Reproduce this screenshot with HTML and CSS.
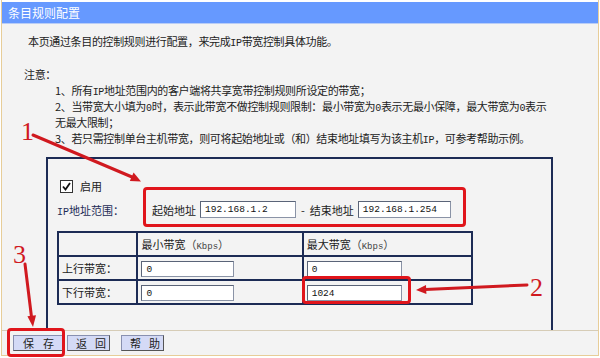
FILE: index.html
```html
<!DOCTYPE html>
<html lang="zh">
<head>
<meta charset="utf-8">
<title>条目规则配置</title>
<link rel="stylesheet" href="styles.css">
</head>
<body>
<div class="frame">
  <div class="titlebar">条目规则配置</div>
  <div class="content">
    <p class="intro">本页通过条目的控制规则进行配置，来完成<span class="lat">IP</span>带宽控制具体功能。</p>
    <p class="note-title">注意：</p>
    <div class="notes">
      <p>1、所有<span class="lat">IP</span>地址范围内的客户端将共享宽带控制规则所设定的带宽；</p>
      <p>2、当带宽大小填为<span class="lat">0</span>时，表示此带宽不做控制规则限制：最小带宽为<span class="lat">0</span>表示无最小保障，最大带宽为<span class="lat">0</span>表示<br>无最大限制；</p>
      <p>3、若只需控制单台主机带宽，则可将起始地址或（和）结束地址填写为该主机<span class="lat">IP</span>，可参考帮助示例。</p>
    </div>
    <div class="box">
      <div class="enable">
        <span class="check"><svg width="11" height="11" viewBox="0 0 11 11"><path d="M2 5.5 L4.5 8.5 L9 2" fill="none" stroke="#111" stroke-width="1.8"/></svg></span>
        <span>启用</span>
      </div>
      <div class="iprow">
        <span class="iplabel"><span class="lat">IP</span>地址范围：</span>
        <span class="field-label">起始地址</span>
        <span class="input w96">192.168.1.2</span>
        <span class="dash">-</span>
        <span class="field-label">结束地址</span>
        <span class="input w93">192.168.1.254</span>
      </div>
      <table class="bw">
        <tr class="head">
          <td class="c1"></td>
          <td class="c2">最小带宽<span class="unit">（<span class="lat">Kbps</span>）</span></td>
          <td class="c3">最大带宽<span class="unit">（<span class="lat">Kbps</span>）</span></td>
        </tr>
        <tr>
          <td class="c1">上行带宽：</td>
          <td class="c2"><span class="input w93">0</span></td>
          <td class="c3"><span class="input w95">0</span></td>
        </tr>
        <tr>
          <td class="c1">下行带宽：</td>
          <td class="c2"><span class="input w93">0</span></td>
          <td class="c3"><span class="input w95">1024</span></td>
        </tr>
      </table>
    </div>
  </div>
  <div class="footer">
    <button class="btn save">保存</button>
    <button class="btn back">返回</button>
    <button class="btn help">帮助</button>
  </div>

  <div class="hl hl1"></div>
  <div class="hl hl2"></div>
  <div class="hl hl3"></div>
  <svg class="marks" width="600" height="358" viewBox="0 0 600 358">
    <g fill="#d0191f" stroke="none">
      <text x="21" y="140" class="num">1</text>
      <text x="530" y="296" class="num">2</text>
      <text x="13" y="263" class="num">3</text>
      <polygon points="141,181.5 129.8,181 133.6,172.6"/>
      <polygon points="416,290 426,285 426.4,294"/>
      <polygon points="33,327 27.4,316.2 36,315.2"/>
    </g>
    <g stroke="#d0191f" stroke-width="3" stroke-linecap="round" fill="none">
      <line x1="33" y1="135" x2="132" y2="177"/>
      <line x1="527" y1="285" x2="425" y2="289.5"/>
      <line x1="25" y1="264" x2="31.5" y2="317"/>
    </g>
  </svg>
</div>
</body>
</html>
```

FILE: styles.css
```css
* { box-sizing: border-box; }

html, body {
  margin: 0;
  padding: 0;
  background: #ffffff;
}

body {
  width: 600px;
  height: 358px;
  overflow: hidden;
  font-family: "Noto Sans CJK SC", "Noto Sans", sans-serif;
  font-size: 11px;
  color: #222;
}

.frame {
  position: relative;
  width: 598px;
  height: 356px;
  margin-left: 1px;
  border-left: 1px solid #e7cd98;
  border-right: 1px solid #e7cd98;
  border-bottom: 1px solid #e7cd98;
  background: #f3f3f3;
}

.titlebar {
  height: 24px;
  border-top: 2px solid #ffffff;
  border-bottom: 1px solid #b9cdf6;
  background: #6699ff;
  color: #ffffff;
  font-size: 12px;
  line-height: 21px;
  padding-left: 6px;
}

.content {
  height: 306px;
  padding-top: 9px;
  overflow: hidden;
}

p { margin: 0; }

.lat {
  font-family: "Liberation Mono", monospace;
  font-size: 10px;
  line-height: 8px;
}

.intro {
  height: 16px;
  line-height: 16px;
  padding-left: 26px;
  letter-spacing: -0.35px;
}

.note-title {
  margin-top: 17px;
  height: 16px;
  line-height: 16px;
  padding-left: 22px;
  letter-spacing: -0.35px;
}

.notes {
  padding-left: 53px;
  letter-spacing: -0.35px;
}

.notes p {
  line-height: 16px;
}

.box {
  margin-top: 11px;
  margin-left: 44px;
  width: 507px;
  height: 174px;
  border: 2px solid #1c2b55;
  border-bottom-width: 1px;
  padding-top: 18px;
  padding-left: 9px;
}

.enable {
  display: flex;
  align-items: center;
  height: 18px;
  gap: 7px;
  padding-left: 3px;
  font-size: 11px;
}

.check {
  display: inline-flex;
  align-items: center;
  justify-content: center;
  width: 13px;
  height: 13px;
  background: #ffffff;
  border: 1px solid #333;
}

.iprow {
  display: flex;
  align-items: center;
  height: 19px;
  margin-top: 5px;
}

.iplabel {
  width: 95px;
  color: #1c2b55;
}

.field-label {
  margin-right: 4px;
}

.dash {
  margin: 0 5px 0 5px;
}

.input {
  display: inline-block;
  height: 17px;
  background: #ffffff;
  border: 1px solid #8a93a6;
  border-top-color: #5a6478;
  border-left-color: #5a6478;
  font-family: "Liberation Mono", monospace;
  font-size: 9.5px;
  line-height: 15px;
  padding-left: 4px;
  color: #111;
}

.w96 { width: 96px; }
.w93 { width: 93px; }
.w95 { width: 95px; }

.bw {
  margin-top: 12px;
  border-collapse: collapse;
  border: 2px solid #1c2b55;
  width: 416px;
}

.bw td {
  border: 2px solid #1c2b55;
  height: 24px;
  padding: 0 0 0 3px;
  vertical-align: middle;
  font-size: 11px;
  line-height: 16px;
}

.bw .c1 { width: 80px; }
.bw .c2 { width: 166px; }
.bw .c3 { width: 170px; }

.bw .input { height: 16px; vertical-align: middle; }

.unit { color: #444; }
.unit .lat { font-size: 9px; }

.footer {
  display: flex;
  align-items: center;
  height: 25px;
  border-top: 1px solid #d6ccb6;
  padding-left: 11px;
}

.btn {
  height: 16px;
  padding: 0;
  background: #d4daf6;
  border: 1px solid #555;
  border-top-color: #8890b0;
  border-left-color: #8890b0;
  font-family: "Noto Sans CJK SC", sans-serif;
  font-size: 11px;
  line-height: 14px;
  white-space: nowrap;
  text-align: center;
  color: #222;
}

.save { width: 50px; letter-spacing: 9px; text-indent: 9px; }
.back { width: 43px; margin-left: 4px; letter-spacing: 8px; text-indent: 8px; }
.help { width: 43px; margin-left: 11px; letter-spacing: 8px; text-indent: 8px; }

.hl {
  position: absolute;
  border: 3px solid #e0151b;
  border-radius: 4px;
}

.hl1 { left: 141px; top: 187px; width: 323px; height: 40px; }
.hl2 { left: 300px; top: 276px; width: 109px; height: 28px; }
.hl3 { left: 5px; top: 328px; width: 58px; height: 29px; }

.marks {
  position: absolute;
  left: -2px;
  top: 0;
  pointer-events: none;
}

.num {
  font-family: "Liberation Serif", serif;
  font-size: 26px;
}
```
